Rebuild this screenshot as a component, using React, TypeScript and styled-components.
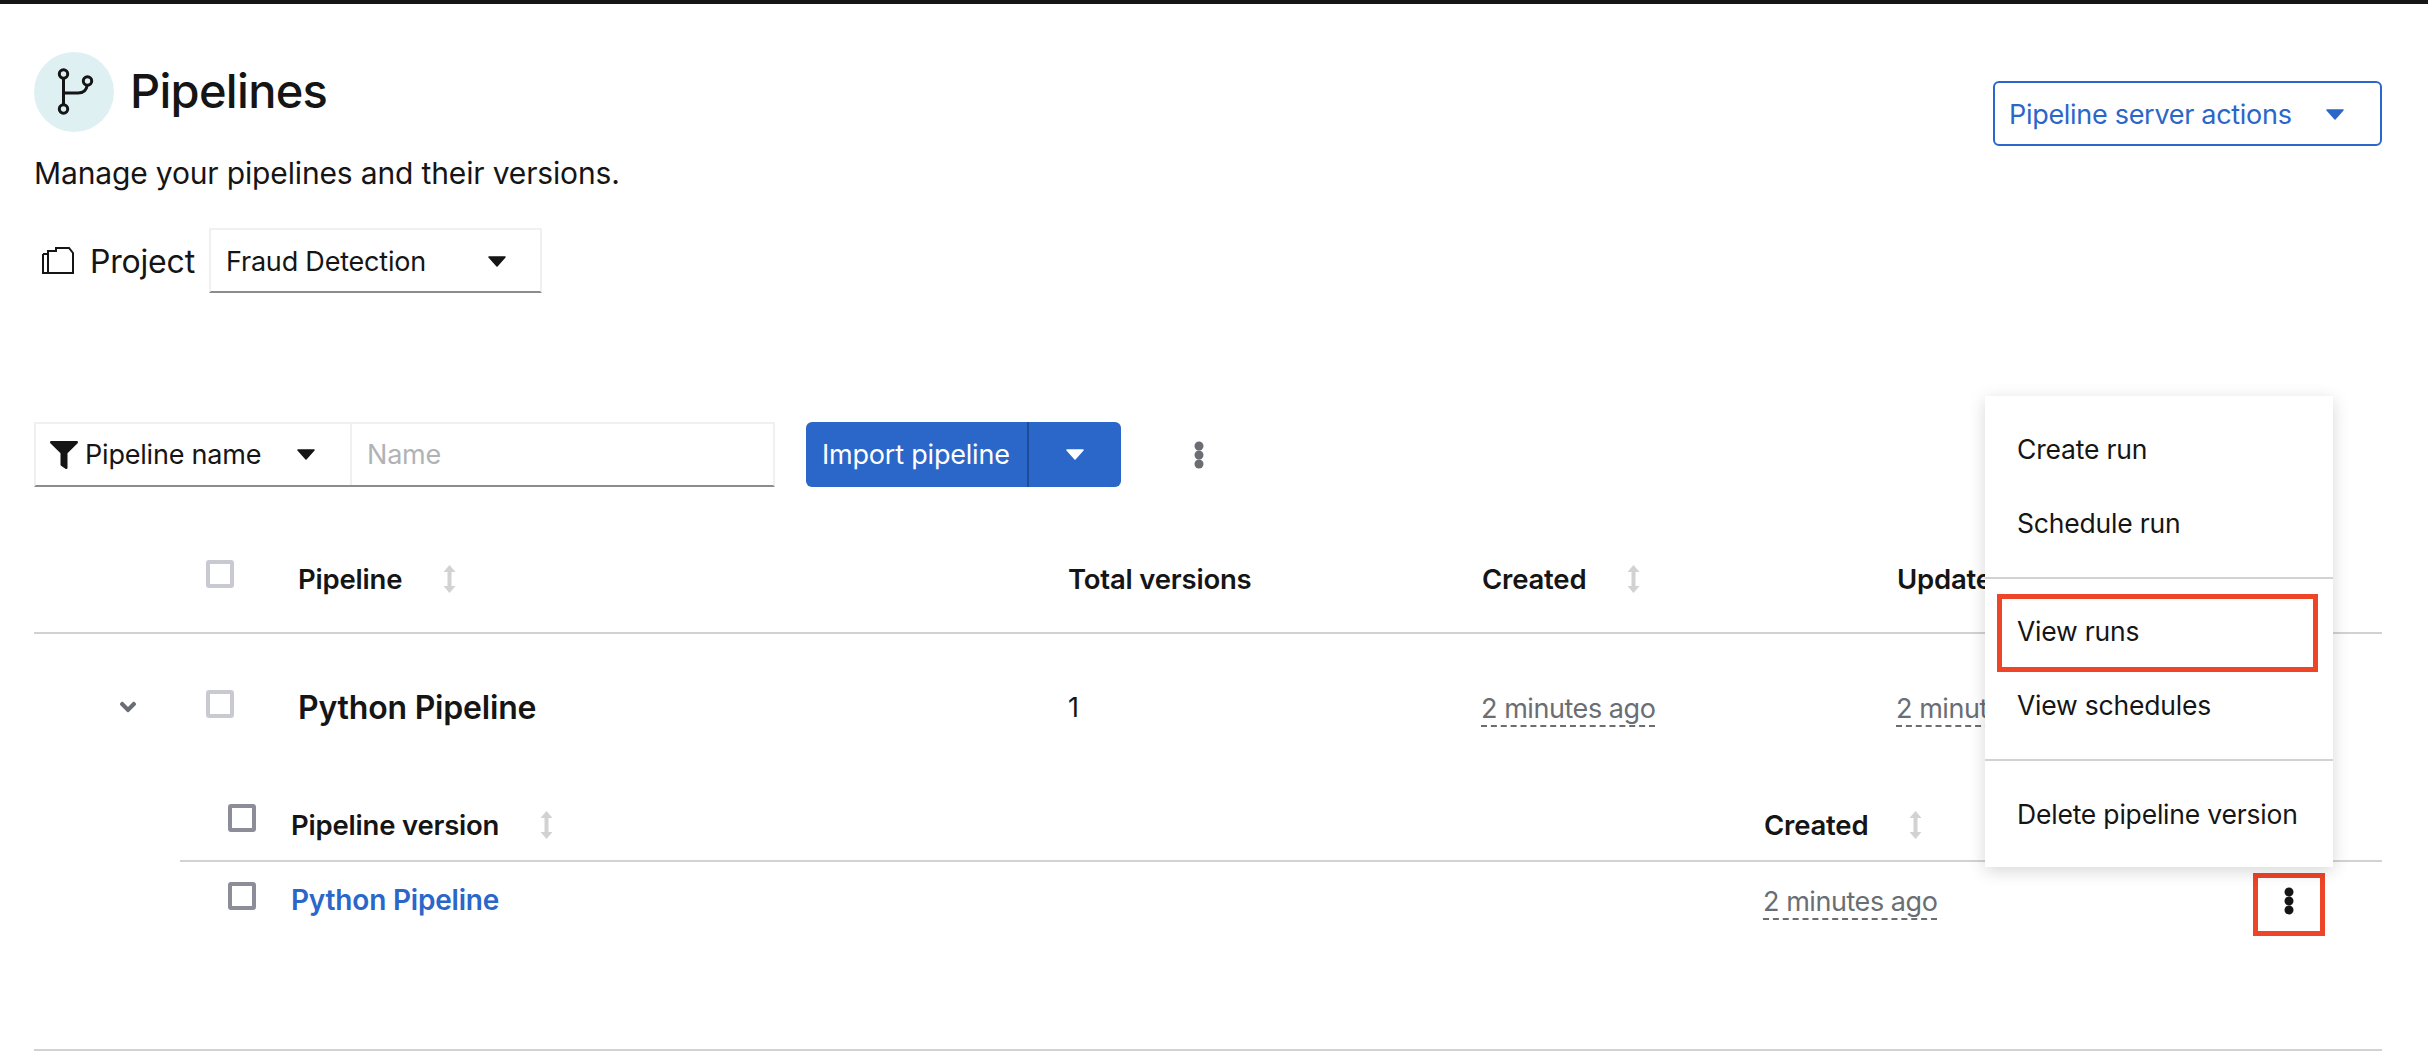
import React from "react";
import styled, { createGlobalStyle } from "styled-components";
import { FaFilter, FaAngleDown } from "react-icons/fa";

const Global = createGlobalStyle`
  html, body { margin: 0; padding: 0; background: #fff; }
  body { font-family: Inter, "Open Sans", "Liberation Sans", sans-serif; color: #151515; overflow: hidden; }
`;

const Page = styled.div`
  position: relative;
  box-sizing: border-box;
  width: 2428px;
  height: 1058px;
  overflow: hidden;
  border-top: 4px solid #151515;
  padding: 48px 46px 0 34px;
  font-size: 27px;
  letter-spacing: -0.2px;
`;

const HeaderRow = styled.header`
  display: flex;
  justify-content: space-between;
  align-items: flex-start;
  height: 80px;
`;

const TitleGroup = styled.div`
  display: flex;
  align-items: center;
  gap: 16px;
  height: 80px;
`;

const IconCircle = styled.div`
  width: 80px;
  height: 80px;
  border-radius: 50%;
  background: #dff0f3;
  display: flex;
  align-items: center;
  justify-content: center;
`;

const Title = styled.h1`
  margin: 0 0 3px;
  font-size: 47px;
  font-weight: 500;
  letter-spacing: -0.7px;
`;

const OutlineButton = styled.button`
  box-sizing: border-box;
  flex: none;
  margin-top: 29px;
  width: 389px;
  height: 65px;
  display: flex;
  align-items: center;
  justify-content: space-between;
  padding: 2px 36px 0 14px;
  background: #fff;
  border: 2px solid #2b66c9;
  border-radius: 6px;
  color: #2b66c9;
  font: inherit;
  letter-spacing: -0.3px;
`;

const Description = styled.p`
  margin: 21px 0 0;
  line-height: 40px;
  height: 40px;
  font-size: 30px;
  letter-spacing: -0.15px;
`;

const ProjectRow = styled.div`
  display: flex;
  align-items: center;
  margin-top: 35px;
  height: 65px;
  padding-left: 8px;
`;

const ProjectLabel = styled.span`
  width: 119px;
  padding: 2px 0 0 16px;
  box-sizing: border-box;
  font-size: 32px;
  margin-right: 16px;
`;

const SelectBox = styled.div`
  box-sizing: border-box;
  width: 333px;
  height: 65px;
  display: flex;
  align-items: center;
  justify-content: space-between;
  padding: 2px 34px 0 15px;
  border: 2px solid #f0f0f0;
  border-bottom-color: #8a8d90;
`;

const Toolbar = styled.div`
  display: flex;
  align-items: center;
  margin-top: 129px;
  height: 65px;
`;

const FilterGroup = styled.div`
  box-sizing: border-box;
  width: 741px;
  height: 65px;
  display: flex;
  border: 2px solid #f0f0f0;
  border-bottom-color: #8a8d90;
`;

const FilterSelect = styled.div`
  box-sizing: border-box;
  width: 316px;
  display: flex;
  align-items: center;
  padding: 0 35px 0 14px;
  border-right: 2px solid #f0f0f0;
`;

const FilterLabel = styled.span`
  margin: 0 auto 0 7px;
`;

const NameInput = styled.div`
  display: flex;
  align-items: center;
  padding-left: 15px;
  color: #b0b3b6;
`;

const SplitButton = styled.div`
  margin-left: 31px;
  width: 315px;
  height: 65px;
  display: flex;
  background: #2b66c9;
  border-radius: 6px;
  color: #fff;
`;

const SplitLabel = styled.span`
  box-sizing: border-box;
  width: 223px;
  display: flex;
  align-items: center;
  padding-left: 16px;
  border-right: 2px solid #1f4c96;
`;

const SplitCaret = styled.span`
  flex: 1;
  display: flex;
  align-items: center;
  justify-content: center;
`;

const ToolbarKebab = styled.span`
  margin-left: 73px;
  display: flex;
`;

const Table = styled.section`
  margin-top: 63px;
  border-bottom: 2px solid #d2d2d2;
  padding-bottom: 121px;
`;

const HeadRow = styled.div`
  display: grid;
  grid-template-columns: 172px 92px 770px 414px 415px 1fr;
  grid-auto-rows: 56px;
  align-items: center;
  height: 56px;
  padding-bottom: 26px;
  border-bottom: 2px solid #d2d2d2;
  font-weight: 600;
  font-size: 27.5px;
`;

const ParentRow = styled.div`
  display: grid;
  grid-template-columns: 172px 92px 770px 414px 415px 1fr;
  grid-auto-rows: 146px;
  align-items: center;
  height: 146px;
`;

const ChildTable = styled.div`
  margin-left: 146px;
`;

const ChildHead = styled.div`
  display: grid;
  grid-template-columns: 111px 1473px 1fr;
  grid-auto-rows: 56px;
  align-items: center;
  height: 56px;
  padding: 16px 0 8px;
  border-bottom: 2px solid #d2d2d2;
  font-weight: 600;
  font-size: 27.5px;
`;

const ChildRow = styled.div`
  display: grid;
  grid-template-columns: 111px 1473px 489px 72px 57px;
  grid-auto-rows: 56px;
  align-items: center;
  height: 56px;
  padding-top: 10px;
`;

const HeadLabel = styled.span`
  display: flex;
  align-items: center;
  gap: 41px;
  padding-top: 2px;
`;

const CheckCell = styled.span<{ $pad?: number; $lift: number }>`
  display: flex;
  padding-left: ${(p) => p.$pad ?? 0}px;
  margin-bottom: ${(p) => p.$lift}px;
`;

const Checkbox = styled.span<{ $dark?: boolean }>`
  box-sizing: border-box;
  width: 28px;
  height: 28px;
  border: 4px solid ${(p) => (p.$dark ? "#8d8d99" : "#c9c9d1")};
  border-radius: 3px;
  background: #fff;
`;

const ChevronCell = styled.span`
  display: flex;
  padding-left: 81px;
  color: #6a6e73;
`;

const ParentName = styled.span`
  font-size: 32px;
  font-weight: 600;
`;

const HeadPlain = styled.span`
  padding-top: 2px;
`;

const VersionLink = styled.a`
  color: #2b66c9;
  font-weight: 600;
  font-size: 28px;
`;

const TimeText = styled.span`
  justify-self: start;
  color: #6a6e73;
  border-bottom: 2px dashed #6a6e73;
  line-height: 33px;
  margin-top: 4px;
  margin-left: -1px;
  letter-spacing: -0.45px;
`;

const KebabCell = styled.span`
  box-sizing: border-box;
  height: 63px;
  margin-top: 9px;
  border: 5px solid #ee4428;
  display: flex;
  justify-content: center;
  padding-top: 9px;
`;

const Menu = styled.nav`
  position: absolute;
  top: 392px;
  right: 95px;
  width: 348px;
  box-sizing: border-box;
  padding: 16px 0;
  background: #fff;
  box-shadow: 0 4px 16px rgba(3, 3, 3, 0.16);
  font-size: 26.5px;
`;

const MenuItem = styled.div`
  position: relative;
  height: 74px;
  display: flex;
  align-items: center;
  padding-left: 32px;
`;

const Highlight = styled.span`
  position: absolute;
  inset: 0 15px -4px 12px;
  border: 5px solid #ee4428;
`;

const MenuDivider = styled.hr<{ $after: number }>`
  margin: 17px 0 ${(p) => p.$after}px;
  height: 2px;
  border: 0;
  background: #d2d2d2;
`;

const Caret = ({ color = "#151515" }: { color?: string }) => (
  <svg width="18" height="11" viewBox="0 0 18 11" aria-hidden="true">
    <path d="M1 1 H17 L9 10 Z" fill={color} stroke={color} strokeLinejoin="round" strokeWidth="1.5" />
  </svg>
);

const SortIcon = () => (
  <svg width="13" height="28" viewBox="0 0 13 28" aria-hidden="true">
    <path d="M6.5 0 L12.5 7 H8.5 V21 H12.5 L6.5 28 L0.5 21 H4.5 V7 H0.5 Z" fill="#d2d2d2" />
  </svg>
);

const Kebab = ({ color }: { color: string }) => (
  <svg width="10" height="28" viewBox="0 0 10 28" aria-hidden="true">
    <circle cx="5" cy="5" r="4.5" fill={color} />
    <circle cx="5" cy="14" r="4.5" fill={color} />
    <circle cx="5" cy="23" r="4.5" fill={color} />
  </svg>
);

const PipelineIcon = () => (
  <svg width="40" height="48" viewBox="0 0 40 48" fill="none" stroke="#151515" strokeWidth="3" aria-hidden="true">
    <circle cx="9.5" cy="6" r="4.2" />
    <circle cx="9.5" cy="41" r="4.2" />
    <circle cx="33.5" cy="13" r="4.2" />
    <path d="M9.5 10.2 V36.8 M9.5 25 H24 C29.5 25 32.5 22 33.2 17.2" />
  </svg>
);

const ProjectIcon = () => (
  <svg width="32" height="27" viewBox="0 0 32 27" fill="none" stroke="#151515" strokeWidth="2" aria-hidden="true">
    <path d="M1 7 V26 H31 V6 L27 1 H14 V4 H6 V26" />
    <path d="M1 7 H6" />
  </svg>
);

export default function App() {
  return (
    <Page>
      <Global />
      <HeaderRow>
        <TitleGroup>
          <IconCircle>
            <PipelineIcon />
          </IconCircle>
          <Title>Pipelines</Title>
        </TitleGroup>
        <OutlineButton>
          Pipeline server actions
          <Caret color="#2b66c9" />
        </OutlineButton>
      </HeaderRow>
      <Description>Manage your pipelines and their versions.</Description>
      <ProjectRow>
        <ProjectIcon />
        <ProjectLabel>Project</ProjectLabel>
        <SelectBox>
          Fraud Detection
          <Caret />
        </SelectBox>
      </ProjectRow>
      <Toolbar>
        <FilterGroup>
          <FilterSelect>
            <FaFilter size={28} color="#151515" />
            <FilterLabel>Pipeline name</FilterLabel>
            <Caret />
          </FilterSelect>
          <NameInput>Name</NameInput>
        </FilterGroup>
        <SplitButton>
          <SplitLabel>Import pipeline</SplitLabel>
          <SplitCaret>
            <Caret color="#fff" />
          </SplitCaret>
        </SplitButton>
        <ToolbarKebab>
          <Kebab color="#6a6e73" />
        </ToolbarKebab>
      </Toolbar>
      <Table>
        <HeadRow>
          <span />
          <CheckCell $lift={8}>
            <Checkbox />
          </CheckCell>
          <HeadLabel>
            Pipeline
            <SortIcon />
          </HeadLabel>
          <HeadPlain>Total versions</HeadPlain>
          <HeadLabel>
            Created
            <SortIcon />
          </HeadLabel>
          <HeadPlain>Updated</HeadPlain>
        </HeadRow>
        <ParentRow>
          <ChevronCell>
            <FaAngleDown size={26} />
          </ChevronCell>
          <CheckCell $lift={6}>
            <Checkbox />
          </CheckCell>
          <ParentName>Python Pipeline</ParentName>
          <span>1</span>
          <TimeText>2 minutes ago</TimeText>
          <TimeText>2 minutes ago</TimeText>
        </ParentRow>
        <ChildTable>
          <ChildHead>
            <CheckCell $pad={48} $lift={12}>
              <Checkbox $dark />
            </CheckCell>
            <HeadLabel>
              Pipeline version
              <SortIcon />
            </HeadLabel>
            <HeadLabel>
              Created
              <SortIcon />
            </HeadLabel>
          </ChildHead>
          <ChildRow>
            <CheckCell $pad={48} $lift={8}>
              <Checkbox $dark />
            </CheckCell>
            <VersionLink>Python Pipeline</VersionLink>
            <TimeText>2 minutes ago</TimeText>
            <KebabCell>
              <Kebab color="#151515" />
            </KebabCell>
            <span />
          </ChildRow>
        </ChildTable>
      </Table>
      <Menu>
        <MenuItem>Create run</MenuItem>
        <MenuItem>Schedule run</MenuItem>
        <MenuDivider $after={15} />
        <MenuItem>
          View runs
          <Highlight />
        </MenuItem>
        <MenuItem>View schedules</MenuItem>
        <MenuDivider $after={16} />
        <MenuItem>Delete pipeline version</MenuItem>
      </Menu>
    </Page>
  );
}
